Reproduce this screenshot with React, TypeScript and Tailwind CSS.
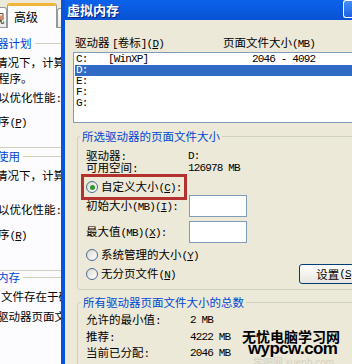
import type { ReactNode } from "react";

const mono =
  "font-['Liberation_Mono',monospace] text-[11px] tracking-[-0.85px]";

function L({ children }: { children: ReactNode }) {
  return <span className={mono}>{children}</span>;
}

function Key({ k }: { k: string }) {
  return (
    <L>
      (<span className="underline underline-offset-[1px]">{k}</span>)
    </L>
  );
}

function Radio({ checked }: { checked?: boolean }) {
  return (
    <span className="flex h-[12px] w-[12px] shrink-0 items-center justify-center rounded-full border border-[#4a6a92] bg-linear-to-br from-[#dcdad0] to-white">
      {checked && <span className="h-[5px] w-[5px] rounded-full bg-[#2a9a2a]" />}
    </span>
  );
}

function BackPanel() {
  return (
    <div className="flex w-[61px] shrink-0 flex-col overflow-hidden">
      <div className="flex h-[28px] shrink-0 items-end">
        <div className="flex h-[21px] w-[7px] items-center overflow-hidden rounded-tr-[3px] border-y border-r border-[#919B9C] bg-linear-to-b from-white to-[#ECEBE6]">
          <span className="-ml-[7px] text-[#333]">规</span>
        </div>
        <div className="flex h-[25px] w-[50px] items-center rounded-t-[3px] border-x border-t-[3px] border-[#919B9C] border-t-[#F2B53A] bg-[#FCFCFE] pl-[6px] text-[12px]">
          高级
        </div>
        <div className="h-[20px] flex-1 rounded-tl-[3px] border-y border-l border-[#919B9C] bg-linear-to-b from-white to-[#ECEBE6]" />
      </div>
      <div className="flex-1 whitespace-nowrap bg-[#FCFCFE]">
        <div className="mt-[9px] flex items-center">
          <span className="-ml-[3px] shrink-0 text-[#0046D5]">器计划</span>
          <span className="ml-[3px] h-px flex-1 bg-[#D0D0BF]" />
        </div>
        <p className="-ml-[4px] mt-[7px]">情况下，计算机</p>
        <p className="-ml-[2px] mt-[4px]">程序。</p>
        <p className="-ml-[2px] mt-[7px]">
          以优化性能<L>:</L>
        </p>
        <p className="-ml-[2px] mt-[10px]">
          序<Key k="P" />
        </p>
        <div className="mt-[18px] h-px bg-[#D0D0BF]" />
        <div className="mt-[2px] flex items-center">
          <span className="-ml-[3px] shrink-0 text-[#0046D5]">使用</span>
          <span className="ml-[3px] h-px flex-1 bg-[#D0D0BF]" />
        </div>
        <p className="-ml-[4px] mt-[7px]">情况下，计算机</p>
        <p className="-ml-[2px] mt-[22px]">
          以优化性能<L>:</L>
        </p>
        <p className="-ml-[2px] mt-[11px]">
          序<Key k="R" />
        </p>
        <div className="mt-[28px] h-px bg-[#D0D0BF]" />
        <div className="flex items-center">
          <span className="-ml-[3px] shrink-0 text-[#0046D5]">内存</span>
          <span className="ml-[3px] h-px flex-1 bg-[#D0D0BF]" />
        </div>
        <p className="ml-[1px] mt-[7px]">文件存在于硬盘</p>
        <p className="-ml-[3px] mt-[8px]">驱动器页面文件</p>
      </div>
    </div>
  );
}

const drives = [
  { d: "C:", label: "[WinXP]", size: "2046 - 4092" },
  { d: "D:", label: "", size: "" },
  { d: "E:", label: "", size: "" },
  { d: "F:", label: "", size: "" },
  { d: "G:", label: "", size: "" },
];

function Dialog() {
  return (
    <div className="flex min-w-0 flex-1 flex-col border-l-4 border-[#0A53DB]">
      <div className="flex h-[20px] shrink-0 items-start bg-linear-to-b from-[#0C62EA] to-[#0852D4]">
        <span className="ml-[2px] mt-[3px] text-[13px] font-bold leading-[14px] text-white [text-shadow:1px_1px_0_#0a1f80]">
          虚拟内存
        </span>
        <span className="ml-auto h-[18px] w-[9px] rounded-l-[3px] border-y border-l border-white bg-linear-to-b from-[#4790F8] to-[#1C60E2]" />
      </div>

      <div className="relative flex-1 overflow-hidden bg-[#ECE9D8]">
        <div className="ml-[10px] mt-[16px] flex whitespace-nowrap">
          <span className="w-[148px]">
            驱动器 <L>[</L>卷标<L>]</L>
            <Key k="D" />
          </span>
          <span>
            页面文件大小<L>(MB)</L>
          </span>
        </div>

        <div className="ml-[8px] mt-[2px] h-[71px] w-[300px] border border-[#7F9DB9] bg-white p-[1px]">
          {drives.map((r) => (
            <div
              key={r.d}
              className={`flex h-[11px] items-center whitespace-nowrap pl-[1px] leading-[11px] ${
                r.d === "D:" ? "bg-[#316AC5] text-white" : ""
              }`}
            >
              <span className={`w-[32px] ${mono}`}>{r.d}</span>
              <span className={`w-[144px] ${mono}`}>{r.label}</span>
              <span className={mono}>{r.size}</span>
            </div>
          ))}
        </div>

        <fieldset className="ml-[12px] mt-[7px] w-[300px] rounded-[3px] border border-[#D0D0BF] pb-[5px]">
          <legend className="ml-[2px] px-[2px] text-[#0046D5]">
            所选驱动器的页面文件大小
          </legend>
          <div className="mt-[7px] flex h-[13px] items-center pl-[8px]">
            <span className="w-[102px]">
              驱动器<L>:</L>
            </span>
            <L>D:</L>
          </div>
          <div className="flex h-[12px] items-center pl-[8px]">
            <span className="w-[102px]">
              可用空间<L>:</L>
            </span>
            <L>126978 MB</L>
          </div>
          <div className="ml-[3px] flex h-[26px] w-[106px] items-center gap-[3px] border-[3px] border-[#B3322D] pl-[2px]">
            <Radio checked />
            <span className="whitespace-nowrap">
              自定义大小<Key k="C" />
              <L>:</L>
            </span>
          </div>
          <div className="-mt-[5px] flex h-[22px] items-center pl-[8px]">
            <span className="w-[103px] whitespace-nowrap">
              初始大小<L>(MB)</L>
              <Key k="I" />
              <L>:</L>
            </span>
            <span className="h-[22px] w-[58px] border border-[#7F9DB9] bg-white" />
          </div>
          <div className="mt-[4px] flex h-[22px] items-center pl-[8px]">
            <span className="w-[103px] whitespace-nowrap">
              最大值<L>(MB)</L>
              <Key k="X" />
              <L>:</L>
            </span>
            <span className="h-[22px] w-[58px] border border-[#7F9DB9] bg-white" />
          </div>
          <div className="mt-[6px] flex h-[12px] items-center gap-[3px] pl-[8px]">
            <Radio />
            <span>
              系统管理的大小<Key k="Y" />
            </span>
          </div>
          <div className="mt-[3px] flex h-[20px] items-center pl-[8px]">
            <div className="flex w-[213px] items-center gap-[3px]">
              <Radio />
              <span>
                无分页文件<Key k="N" />
              </span>
            </div>
            <button className="flex h-[20px] w-[75px] items-center justify-center rounded-[3px] border border-[#003C74] bg-linear-to-b from-white to-[#E6E5DE]">
              设置<Key k="S" />
            </button>
          </div>
        </fieldset>

        <fieldset className="ml-[12px] mt-[6px] w-[300px] rounded-[3px] border border-[#D0D0BF] pb-[8px]">
          <legend className="ml-[3px] px-[2px] text-[#0046D5]">
            所有驱动器页面文件大小的总数
          </legend>
          <div className="mt-[6px] flex flex-col gap-[4.5px] pl-[8px]">
            <div className="flex h-[12px] items-center">
              <span className="w-[104px]">
                允许的最小值<L>:</L>
              </span>
              <L>2 MB</L>
            </div>
            <div className="flex h-[12px] items-center">
              <span className="w-[104px]">
                推荐<L>:</L>
              </span>
              <L>4222 MB</L>
            </div>
            <div className="flex h-[12px] items-center">
              <span className="w-[104px]">
                当前已分配<L>:</L>
              </span>
              <L>2046 MB</L>
            </div>
          </div>
        </fieldset>

        {/* watermark */}
        <span className="absolute left-[177px] top-[308px] text-[14px] font-bold leading-[16px] text-black">
          无忧电脑学习网
        </span>
        <span className="absolute left-[183px] top-[320px] font-['Liberation_Sans',sans-serif] text-[17px] font-bold leading-[17px] tracking-[-0.6px] text-black">
          wypcw.com
        </span>
        <span className="absolute left-[188px] top-[337px] whitespace-nowrap text-[10px] leading-[10px] text-[#d6d1c2]">
          学吧网 <span className="font-['Liberation_Sans',sans-serif]">xuenb.com</span>
        </span>
      </div>
    </div>
  );
}

export default function App() {
  return (
    <div className="flex h-[364px] w-[352px] overflow-hidden bg-[#ECE9D8] font-['Noto_Sans_CJK_SC',sans-serif] text-[11.5px] leading-[12px] text-black">
      <BackPanel />
      <Dialog />
    </div>
  );
}
